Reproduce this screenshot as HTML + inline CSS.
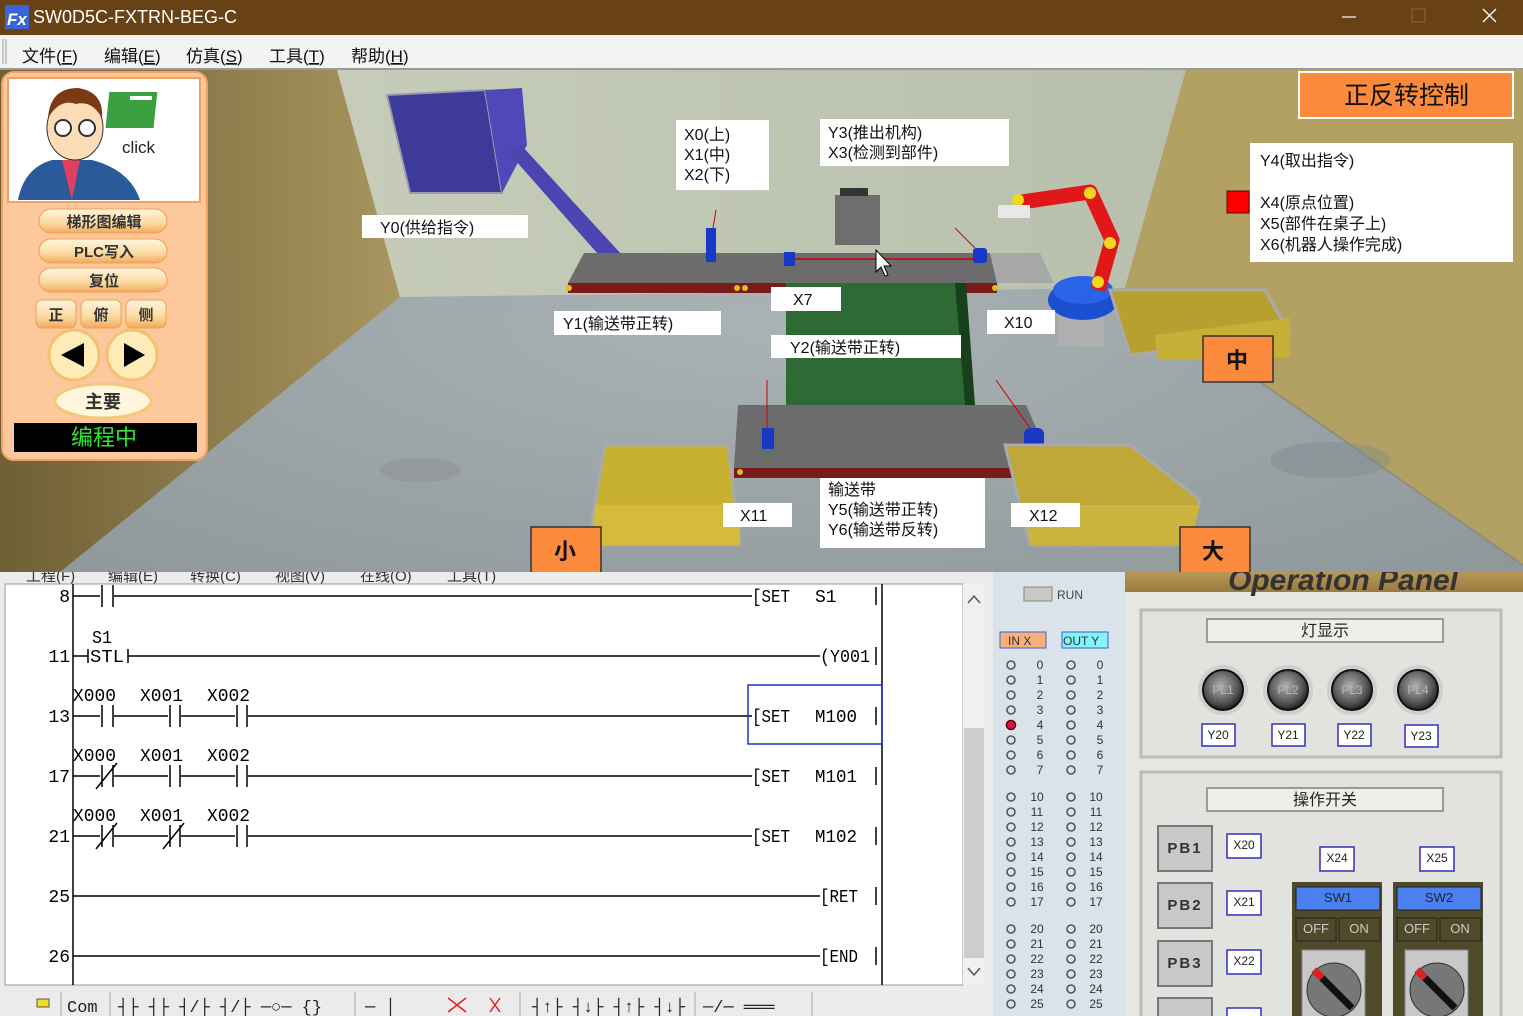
<!DOCTYPE html>
<html><head><meta charset="utf-8"><style>
html,body{margin:0;padding:0;width:1523px;height:1016px;overflow:hidden;background:#fff}
svg{display:block}
.cj{font-family:"Liberation Sans","Noto Sans CJK SC",sans-serif}
.mo{font-family:"Liberation Mono","DejaVu Sans Mono",monospace}
</style></head><body>
<svg width="1523" height="1016" viewBox="0 0 1523 1016" xmlns="http://www.w3.org/2000/svg">
<defs>
<linearGradient id="lw" x1="0" y1="0" x2="1" y2="0"><stop offset="0" stop-color="#6f5f35"/><stop offset="1" stop-color="#a8955f"/></linearGradient>
<linearGradient id="bw" x1="0" y1="0" x2="1" y2="0"><stop offset="0" stop-color="#c6ccb8"/><stop offset="1" stop-color="#b8c0ad"/></linearGradient>
<radialGradient id="fl" cx="0.5" cy="0.5" r="0.7"><stop offset="0" stop-color="#a9b2b4"/><stop offset="1" stop-color="#8e9799"/></radialGradient>
<linearGradient id="pill" x1="0" y1="0" x2="0" y2="1"><stop offset="0" stop-color="#fff6e0"/><stop offset="0.6" stop-color="#fbd9a0"/><stop offset="1" stop-color="#f2a85a"/></linearGradient>
<radialGradient id="lamp" cx="0.45" cy="0.4" r="0.6"><stop offset="0" stop-color="#b0b0b0"/><stop offset="0.7" stop-color="#555"/><stop offset="1" stop-color="#222"/></radialGradient>
<linearGradient id="hdr" x1="0" y1="0" x2="0" y2="1"><stop offset="0" stop-color="#b89858"/><stop offset="1" stop-color="#9a7c40"/></linearGradient>
<clipPath id="bot"><rect x="0" y="572" width="1523" height="444"/></clipPath>
</defs>

<!-- title bar -->
<rect x="0" y="0" width="1523" height="35" fill="#684214"/>
<rect x="5" y="5" width="24" height="24" fill="#3a64d8"/>
<text x="7" y="25" font-size="17" font-style="italic" font-weight="bold" fill="#fff" font-family="Liberation Sans,sans-serif">Fx</text>
<text x="33" y="23" font-size="18" fill="#fff" font-family="Liberation Sans,sans-serif">SW0D5C-FXTRN-BEG-C</text>
<line x1="1342" y1="17" x2="1356" y2="17" stroke="#fff" stroke-width="1.2"/>
<rect x="1412" y="9" width="13" height="13" fill="none" stroke="#8a6a40"/>
<path d="M1483 9 L1496 22 M1496 9 L1483 22" stroke="#fff" stroke-width="1.3"/>

<!-- menu -->
<rect x="0" y="35" width="1523" height="34" fill="#f3f3f3"/>
<line x1="3" y1="39" x2="3" y2="64" stroke="#999"/><line x1="6" y1="39" x2="6" y2="64" stroke="#999"/>
<g class="cj" font-size="17" fill="#111">
<text x="22" y="62">文件(<tspan text-decoration="underline">F</tspan>)</text>
<text x="104" y="62">编辑(<tspan text-decoration="underline">E</tspan>)</text>
<text x="186" y="62">仿真(<tspan text-decoration="underline">S</tspan>)</text>
<text x="269" y="62">工具(<tspan text-decoration="underline">T</tspan>)</text>
<text x="351" y="62">帮助(<tspan text-decoration="underline">H</tspan>)</text>
</g>
<rect x="0" y="68" width="1523" height="2" fill="#9a9a9a"/>

<!-- 3D scene -->
<rect x="0" y="70" width="1523" height="502" fill="url(#fl)"/>
<polygon points="0,70 337,70 400,297 60,572 0,572" fill="url(#lw)"/>
<polygon points="337,70 1186,70 1125,288 400,297" fill="url(#bw)"/>
<polygon points="1186,70 1523,70 1523,565 1125,288" fill="#b3a063"/>
<line x1="1125" y1="288" x2="1523" y2="565" stroke="#8e8e80" stroke-width="2"/>
<ellipse cx="420" cy="470" rx="40" ry="12" fill="#8a8a90" opacity="0.4"/>
<ellipse cx="1330" cy="460" rx="60" ry="18" fill="#7e888c" opacity="0.4"/>

<!-- supply hopper -->
<polygon points="387,95 485,90 502,193 410,193" fill="#3d3a9a" stroke="#9a9ab0" stroke-width="2"/>
<polygon points="485,90 522,88 527,145 502,193" fill="#5048b8"/>
<polygon points="508,152 522,146 622,255 612,270" fill="#4a45b0"/>
<polygon points="612,270 622,255 625,262 616,274" fill="#ddd"/>

<!-- conveyors top -->
<polygon points="584,253 741,253 741,283 568,283" fill="#6c6c6c"/>
<rect x="568" y="283" width="173" height="10" fill="#7a1a1a"/>
<polygon points="741,253 990,253 997,283 741,283" fill="#6c6c6c"/>
<rect x="741" y="283" width="256" height="10" fill="#7a1a1a"/>
<polygon points="990,253 1040,253 1054,283 997,283" fill="#a8a8a8"/>
<rect x="786" y="283" width="180" height="122" fill="#2f6a34"/>
<polygon points="955,283 966,283 975,405 965,405" fill="#18401c"/>
<polygon points="738,405 1026,405 1054,468 734,468" fill="#6c6c6c"/>
<rect x="734" y="468" width="320" height="10" fill="#7a1a1a"/>
<g fill="#d8c020"><circle cx="569" cy="288" r="3"/><circle cx="737" cy="288" r="3"/><circle cx="745" cy="288" r="3"/><circle cx="995" cy="288" r="3"/><circle cx="740" cy="472" r="3"/><circle cx="1052" cy="472" r="3"/></g>
<!-- sensors -->
<rect x="706" y="228" width="10" height="34" fill="#1838c8"/><line x1="713" y1="228" x2="716" y2="210" stroke="#c00"/>
<rect x="784" y="252" width="11" height="14" fill="#1838c8"/>
<line x1="795" y1="259" x2="975" y2="259" stroke="#c00" stroke-width="1.5"/>
<rect x="973" y="248" width="14" height="15" rx="3" fill="#1838c8"/><line x1="975" y1="248" x2="955" y2="228" stroke="#c00"/>
<rect x="762" y="428" width="12" height="21" fill="#1838c8"/><line x1="767" y1="428" x2="767" y2="380" stroke="#c00"/>
<rect x="1024" y="428" width="20" height="21" rx="6" fill="#1838c8"/><line x1="1030" y1="428" x2="996" y2="380" stroke="#c00"/>
<!-- pusher -->
<rect x="835" y="195" width="45" height="50" fill="#6e6e6e"/><rect x="840" y="188" width="28" height="8" fill="#333"/>
<!-- robot -->
<rect x="1058" y="300" width="46" height="46" fill="#b0b0b0"/>
<ellipse cx="1083" cy="300" rx="35" ry="20" fill="#1a4fd0"/>
<ellipse cx="1083" cy="290" rx="30" ry="14" fill="#2a62e8"/>
<path d="M1098 290 L1112 240 L1090 192 L1015 203" fill="none" stroke="#e01818" stroke-width="15" stroke-linejoin="round"/>
<g fill="#f0d820"><circle cx="1098" cy="282" r="6"/><circle cx="1110" cy="243" r="6"/><circle cx="1090" cy="193" r="6"/><circle cx="1018" cy="200" r="6"/></g>
<rect x="998" y="205" width="32" height="13" fill="#e8e8e8"/>
<!-- bins -->
<polygon points="1110,290 1265,290 1290,335 1130,355" fill="#b8a030" stroke="#aaa" stroke-width="3"/>
<polygon points="1155,335 1290,318 1290,357 1158,360" fill="#c8b038"/>
<polygon points="605,445 728,445 740,545 588,545" fill="#c8b030" stroke="#aaa" stroke-width="3"/>
<polygon points="595,505 740,505 740,545 592,545" fill="#d4bc3a"/>
<polygon points="1005,445 1130,445 1200,500 1185,545 1030,545" fill="#c0a838" stroke="#aaa" stroke-width="3"/>
<polygon points="1025,505 1200,505 1190,545 1030,545" fill="#ccb43e"/>

<!-- labels -->
<g class="cj" font-size="16" fill="#111">
<rect x="362" y="215" width="166" height="23" fill="#fff"/><text x="380" y="233">Y0(供给指令)</text>
<rect x="676" y="120" width="93" height="70" fill="#fff"/><text x="684" y="140">X0(上)</text><text x="684" y="160">X1(中)</text><text x="684" y="180">X2(下)</text>
<rect x="820" y="119" width="189" height="47" fill="#fff"/><text x="828" y="138">Y3(推出机构)</text><text x="828" y="158">X3(检测到部件)</text>
<rect x="1250" y="143" width="263" height="119" fill="#fff"/><text x="1260" y="166">Y4(取出指令)</text><text x="1260" y="208">X4(原点位置)</text><text x="1260" y="229">X5(部件在桌子上)</text><text x="1260" y="250">X6(机器人操作完成)</text>
<rect x="1227" y="191" width="22" height="22" fill="#f00" stroke="#600"/>
<rect x="771" y="287" width="70" height="24" fill="#fff"/><text x="793" y="305">X7</text>
<rect x="554" y="311" width="167" height="24" fill="#fff"/><text x="563" y="329">Y1(输送带正转)</text>
<rect x="987" y="310" width="68" height="24" fill="#fff"/><text x="1004" y="328">X10</text>
<rect x="771" y="335" width="190" height="23" fill="#fff"/><text x="790" y="353">Y2(输送带正转)</text>
<rect x="723" y="503" width="69" height="24" fill="#fff"/><text x="740" y="521">X11</text>
<rect x="820" y="478" width="165" height="70" fill="#fff"/><text x="828" y="495">输送带</text><text x="828" y="515">Y5(输送带正转)</text><text x="828" y="535">Y6(输送带反转)</text>
<rect x="1011" y="503" width="69" height="24" fill="#fff"/><text x="1029" y="521">X12</text>
</g>
<g class="cj" fill="#111">
<rect x="1299" y="72" width="214" height="46" fill="#fb8a3c" stroke="#fff" stroke-width="2"/><text x="1344" y="104" font-size="25">正反转控制</text>
<rect x="1203" y="336" width="70" height="46" fill="#fb8a3c" stroke="#333" stroke-width="1.5"/><text x="1226" y="368" font-size="22" font-weight="bold">中</text>
<rect x="531" y="527" width="70" height="50" fill="#fb8a3c" stroke="#333" stroke-width="1.5"/><text x="554" y="559" font-size="22" font-weight="bold">小</text>
<rect x="1180" y="527" width="70" height="50" fill="#fb8a3c" stroke="#333" stroke-width="1.5"/><text x="1202" y="559" font-size="22" font-weight="bold">大</text>
</g>
<!-- cursor -->
<path d="M876 250 L876 272 L881 267 L885 276 L888 275 L884 266 L891 266 Z" fill="#fff" stroke="#000"/>

<!-- left panel -->
<rect x="2" y="72" width="205" height="388" rx="12" fill="#fcc89c" stroke="#f4a060" stroke-width="2"/>
<rect x="8" y="78" width="192" height="124" fill="#fff" stroke="#f0a060" stroke-width="2"/>
<path d="M18 200 Q24 168 52 160 L92 160 Q130 170 140 200 Z" fill="#2a5a9a"/>
<path d="M62 160 L72 200 L80 160 Z" fill="#e04060"/>
<ellipse cx="75" cy="128" rx="28" ry="32" fill="#fddcb8" stroke="#333"/>
<path d="M48 118 Q50 88 78 88 Q104 92 102 118 Q92 100 76 104 Q60 98 48 118Z" fill="#7a3a12"/>
<circle cx="63" cy="128" r="8" fill="#fff" stroke="#333" stroke-width="2"/><circle cx="87" cy="128" r="8" fill="#fff" stroke="#333" stroke-width="2"/>
<rect x="119" y="92" width="48" height="36" fill="#3aa040" transform="skewX(-6)"/><rect x="130" y="96" width="22" height="4" fill="#fff"/>
<text x="122" y="153" font-size="17" fill="#222" font-family="Liberation Sans,sans-serif">click</text>
<g class="cj" font-size="15" font-weight="bold" fill="#333" text-anchor="middle">
<rect x="39" y="209" width="128" height="24" rx="12" fill="url(#pill)" stroke="#f2a050"/><text x="104" y="227">梯形图编辑</text>
<rect x="39" y="239" width="128" height="24" rx="12" fill="url(#pill)" stroke="#f2a050"/><text x="104" y="257">PLC写入</text>
<rect x="39" y="268" width="128" height="24" rx="12" fill="url(#pill)" stroke="#f2a050"/><text x="104" y="286">复位</text>
<rect x="36" y="300" width="40" height="28" rx="6" fill="url(#pill)" stroke="#f2a050"/><text x="56" y="320">正</text>
<rect x="81" y="300" width="40" height="28" rx="6" fill="url(#pill)" stroke="#f2a050"/><text x="101" y="320">俯</text>
<rect x="126" y="300" width="40" height="28" rx="6" fill="url(#pill)" stroke="#f2a050"/><text x="146" y="320">侧</text>
<circle cx="74" cy="355" r="25" fill="#fdebb8" stroke="#f6c070" stroke-width="3"/>
<circle cx="132" cy="355" r="25" fill="#fdebb8" stroke="#f6c070" stroke-width="3"/>
<ellipse cx="103" cy="401" rx="48" ry="17" fill="#fff6dc" stroke="#f4c878" stroke-width="3"/><text x="103" y="408" font-size="18">主要</text>
</g>
<path d="M61 355 L84 343 L84 367 Z" fill="#000"/><path d="M145 355 L124 343 L124 367 Z" fill="#000"/>
<rect x="14" y="423" width="183" height="29" fill="#000"/>
<text x="104" y="445" text-anchor="middle" font-size="22" fill="#2ee82e" class="cj">编程中</text>

<!-- ladder window -->
<rect x="0" y="572" width="993" height="444" fill="#ececec"/>
<g class="cj" font-size="15" fill="#333" clip-path="url(#bot)"><text x="26" y="581">工程(F)</text><text x="108" y="581">编辑(E)</text><text x="190" y="581">转换(C)</text><text x="275" y="581">视图(V)</text><text x="360" y="581">在线(O)</text><text x="447" y="581">工具(T)</text></g>
<rect x="5" y="584" width="958" height="401" fill="#fff" stroke="#999"/>
<line x1="73" y1="584" x2="73" y2="985" stroke="#000" stroke-width="1.5"/>
<line x1="882" y1="584" x2="882" y2="985" stroke="#000" stroke-width="1.5"/>
<g stroke="#000" stroke-width="1.5" fill="none">
<path d="M73 596 H100 M114 596 H752"/><path d="M102 585 V607 M113 585 V607"/>
<path d="M73 656 H88 M128 656 H820"/><path d="M88 649 V663 M128 649 V663"/>
<path d="M73 716 H100 M114 716 H168 M181 716 H235 M248 716 H752"/>
<path d="M102 705 V727 M113 705 V727 M170 705 V727 M180 705 V727 M237 705 V727 M247 705 V727"/>
<path d="M73 776 H100 M114 776 H168 M181 776 H235 M248 776 H752"/>
<path d="M102 765 V787 M113 765 V787 M170 765 V787 M180 765 V787 M237 765 V787 M247 765 V787 M96 789 L117 763"/>
<path d="M73 836 H100 M114 836 H168 M181 836 H235 M248 836 H752"/>
<path d="M102 825 V847 M113 825 V847 M170 825 V847 M180 825 V847 M237 825 V847 M247 825 V847 M96 849 L117 823 M163 849 L184 823"/>
<path d="M73 896 H820 M73 956 H820"/>
<path d="M876 587 V605 M876 647 V665 M876 707 V725 M876 767 V785 M876 827 V845 M876 887 V905 M876 947 V965"/>
</g>
<g class="mo" font-size="18" fill="#000" lengthAdjust="spacingAndGlyphs">
<text x="70" y="602" text-anchor="end">8</text><text x="70" y="662" text-anchor="end">11</text><text x="70" y="722" text-anchor="end">13</text><text x="70" y="782" text-anchor="end">17</text><text x="70" y="842" text-anchor="end">21</text><text x="70" y="902" text-anchor="end">25</text><text x="70" y="962" text-anchor="end">26</text>
<text x="92" y="643" textLength="20" lengthAdjust="spacingAndGlyphs">S1</text><text x="90" y="662" textLength="34" lengthAdjust="spacingAndGlyphs">STL</text>
<text x="73" y="701" textLength="43" lengthAdjust="spacingAndGlyphs">X000</text><text x="140" y="701" textLength="43" lengthAdjust="spacingAndGlyphs">X001</text><text x="207" y="701" textLength="43" lengthAdjust="spacingAndGlyphs">X002</text>
<text x="73" y="761" textLength="43" lengthAdjust="spacingAndGlyphs">X000</text><text x="140" y="761" textLength="43" lengthAdjust="spacingAndGlyphs">X001</text><text x="207" y="761" textLength="43" lengthAdjust="spacingAndGlyphs">X002</text>
<text x="73" y="821" textLength="43" lengthAdjust="spacingAndGlyphs">X000</text><text x="140" y="821" textLength="43" lengthAdjust="spacingAndGlyphs">X001</text><text x="207" y="821" textLength="43" lengthAdjust="spacingAndGlyphs">X002</text>
<text x="752" y="602" textLength="38" lengthAdjust="spacingAndGlyphs">[SET</text><text x="815" y="602">S1</text>
<text x="820" y="662" textLength="50" lengthAdjust="spacingAndGlyphs">(Y001</text>
<text x="752" y="722" textLength="38" lengthAdjust="spacingAndGlyphs">[SET</text><text x="815" y="722" textLength="42" lengthAdjust="spacingAndGlyphs">M100</text>
<text x="752" y="782" textLength="38" lengthAdjust="spacingAndGlyphs">[SET</text><text x="815" y="782" textLength="42" lengthAdjust="spacingAndGlyphs">M101</text>
<text x="752" y="842" textLength="38" lengthAdjust="spacingAndGlyphs">[SET</text><text x="815" y="842" textLength="42" lengthAdjust="spacingAndGlyphs">M102</text>
<text x="820" y="902" textLength="38" lengthAdjust="spacingAndGlyphs">[RET</text>
<text x="820" y="962" textLength="38" lengthAdjust="spacingAndGlyphs">[END</text>
</g>
<rect x="748" y="685" width="134" height="59" fill="none" stroke="#2030c0" stroke-width="1.5"/>
<rect x="963" y="584" width="22" height="401" fill="#f0f0f0"/>
<rect x="964" y="728" width="20" height="230" fill="#cdcdcd"/>
<path d="M968 603 L974 596 L980 603" fill="none" stroke="#555" stroke-width="1.5"/><path d="M968 968 L974 975 L980 968" fill="none" stroke="#555" stroke-width="1.5"/>
<!-- toolbar -->
<rect x="5" y="987" width="830" height="29" fill="#ebebeb"/>
<rect x="37" y="999" width="12" height="8" fill="#f0e020" stroke="#555"/>
<g class="mo" font-size="17" fill="#222"><text x="67" y="1012">Com</text>
<text x="118" y="1012">┤├ ┤├ ┤/├ ┤/├ ─○─ {}</text>
<text x="365" y="1012">─  │</text>
<text x="532" y="1012">┤↑├ ┤↓├ ┤↑├ ┤↓├</text>
<text x="703" y="1012">─/─ ═══</text></g>
<path d="M448 998 L466 1012 M466 998 L448 1012 M490 998 L500 1012 M500 998 L490 1012" stroke="#e02020" stroke-width="1.5"/>
<g stroke="#aaa"><line x1="61" y1="992" x2="61" y2="1016"/><line x1="110" y1="992" x2="110" y2="1016"/><line x1="355" y1="992" x2="355" y2="1016"/><line x1="520" y1="992" x2="520" y2="1016"/><line x1="695" y1="992" x2="695" y2="1016"/><line x1="812" y1="992" x2="812" y2="1016"/></g>

<!-- IO panel -->
<rect x="993" y="572" width="132" height="444" fill="#dae2ea"/>
<rect x="1024" y="587" width="28" height="14" fill="#c8c8c8" stroke="#8a8a6a"/>
<text x="1057" y="599" font-size="12" fill="#444" font-family="Liberation Sans,sans-serif">RUN</text>
<rect x="1000" y="632" width="46" height="16" fill="#f8b07a" stroke="#4060d0"/><text x="1008" y="645" font-size="12" fill="#333" font-family="Liberation Sans,sans-serif">IN X</text>
<rect x="1062" y="632" width="46" height="16" fill="#80f4f8" stroke="#4060d0"/><text x="1063" y="645" font-size="12" fill="#333" font-family="Liberation Sans,sans-serif">OUT Y</text>
<g font-size="12" fill="#333" font-family="Liberation Sans,sans-serif" text-anchor="middle" stroke-width="1.6">
<g fill="none" stroke="#555">
<circle cx="1011" cy="665" r="4"/><circle cx="1011" cy="680" r="4"/><circle cx="1011" cy="695" r="4"/><circle cx="1011" cy="710" r="4"/><circle cx="1011" cy="740" r="4"/><circle cx="1011" cy="755" r="4"/><circle cx="1011" cy="770" r="4"/>
<circle cx="1071" cy="665" r="4"/><circle cx="1071" cy="680" r="4"/><circle cx="1071" cy="695" r="4"/><circle cx="1071" cy="710" r="4"/><circle cx="1071" cy="725" r="4"/><circle cx="1071" cy="740" r="4"/><circle cx="1071" cy="755" r="4"/><circle cx="1071" cy="770" r="4"/>
<circle cx="1011" cy="797" r="4"/><circle cx="1011" cy="812" r="4"/><circle cx="1011" cy="827" r="4"/><circle cx="1011" cy="842" r="4"/><circle cx="1011" cy="857" r="4"/><circle cx="1011" cy="872" r="4"/><circle cx="1011" cy="887" r="4"/><circle cx="1011" cy="902" r="4"/>
<circle cx="1071" cy="797" r="4"/><circle cx="1071" cy="812" r="4"/><circle cx="1071" cy="827" r="4"/><circle cx="1071" cy="842" r="4"/><circle cx="1071" cy="857" r="4"/><circle cx="1071" cy="872" r="4"/><circle cx="1071" cy="887" r="4"/><circle cx="1071" cy="902" r="4"/>
<circle cx="1011" cy="929" r="4"/><circle cx="1011" cy="944" r="4"/><circle cx="1011" cy="959" r="4"/><circle cx="1011" cy="974" r="4"/><circle cx="1011" cy="989" r="4"/><circle cx="1011" cy="1004" r="4"/>
<circle cx="1071" cy="929" r="4"/><circle cx="1071" cy="944" r="4"/><circle cx="1071" cy="959" r="4"/><circle cx="1071" cy="974" r="4"/><circle cx="1071" cy="989" r="4"/><circle cx="1071" cy="1004" r="4"/>
</g>
<circle cx="1011" cy="725" r="4.5" fill="#e0104a" stroke="#600"/>
<text x="1040" y="669">0</text><text x="1040" y="684">1</text><text x="1040" y="699">2</text><text x="1040" y="714">3</text><text x="1040" y="729">4</text><text x="1040" y="744">5</text><text x="1040" y="759">6</text><text x="1040" y="774">7</text>
<text x="1100" y="669">0</text><text x="1100" y="684">1</text><text x="1100" y="699">2</text><text x="1100" y="714">3</text><text x="1100" y="729">4</text><text x="1100" y="744">5</text><text x="1100" y="759">6</text><text x="1100" y="774">7</text>
<text x="1037" y="801">10</text><text x="1037" y="816">11</text><text x="1037" y="831">12</text><text x="1037" y="846">13</text><text x="1037" y="861">14</text><text x="1037" y="876">15</text><text x="1037" y="891">16</text><text x="1037" y="906">17</text>
<text x="1096" y="801">10</text><text x="1096" y="816">11</text><text x="1096" y="831">12</text><text x="1096" y="846">13</text><text x="1096" y="861">14</text><text x="1096" y="876">15</text><text x="1096" y="891">16</text><text x="1096" y="906">17</text>
<text x="1037" y="933">20</text><text x="1037" y="948">21</text><text x="1037" y="963">22</text><text x="1037" y="978">23</text><text x="1037" y="993">24</text><text x="1037" y="1008">25</text>
<text x="1096" y="933">20</text><text x="1096" y="948">21</text><text x="1096" y="963">22</text><text x="1096" y="978">23</text><text x="1096" y="993">24</text><text x="1096" y="1008">25</text>
</g>

<!-- Operation panel -->
<rect x="1125" y="572" width="398" height="444" fill="#e6e6e2"/>
<rect x="1125" y="572" width="398" height="20" fill="url(#hdr)"/>
<text x="1228" y="590" font-size="30" font-weight="bold" font-style="italic" fill="#333" font-family="Liberation Sans,sans-serif" clip-path="url(#bot)">Operation Panel</text>
<rect x="1141" y="610" width="360" height="147" fill="#e2e2de" stroke="#bcbcb4" stroke-width="3"/>
<rect x="1207" y="619" width="236" height="23" fill="#eeeeea" stroke="#9a9a94" stroke-width="2"/>
<text x="1325" y="636" text-anchor="middle" font-size="16" class="cj" fill="#222">灯显示</text>
<g font-family="Liberation Sans,sans-serif" font-size="12" text-anchor="middle" fill="#b8b8b8">
<circle cx="1223" cy="690" r="25" fill="#cfcfcf"/><circle cx="1223" cy="690" r="20" fill="url(#lamp)" stroke="#111" stroke-width="2"/><text x="1223" y="694">PL1</text>
<circle cx="1288" cy="690" r="25" fill="#cfcfcf"/><circle cx="1288" cy="690" r="20" fill="url(#lamp)" stroke="#111" stroke-width="2"/><text x="1288" y="694">PL2</text>
<circle cx="1352" cy="690" r="25" fill="#cfcfcf"/><circle cx="1352" cy="690" r="20" fill="url(#lamp)" stroke="#111" stroke-width="2"/><text x="1352" y="694">PL3</text>
<circle cx="1418" cy="690" r="25" fill="#cfcfcf"/><circle cx="1418" cy="690" r="20" fill="url(#lamp)" stroke="#111" stroke-width="2"/><text x="1418" y="694">PL4</text>
</g>
<g font-family="Liberation Sans,sans-serif" font-size="12" text-anchor="middle" fill="#222">
<rect x="1202" y="724" width="33" height="22" fill="#fff" stroke="#3030c0" stroke-width="1.5"/><text x="1218" y="739">Y20</text>
<rect x="1272" y="724" width="33" height="22" fill="#fff" stroke="#3030c0" stroke-width="1.5"/><text x="1288" y="739">Y21</text>
<rect x="1338" y="724" width="33" height="22" fill="#fff" stroke="#3030c0" stroke-width="1.5"/><text x="1354" y="739">Y22</text>
<rect x="1405" y="725" width="33" height="22" fill="#fff" stroke="#3030c0" stroke-width="1.5"/><text x="1421" y="740">Y23</text>
</g>
<rect x="1141" y="772" width="360" height="250" fill="#e2e2de" stroke="#bcbcb4" stroke-width="3"/>
<rect x="1207" y="788" width="236" height="23" fill="#eeeeea" stroke="#9a9a94" stroke-width="2"/>
<text x="1325" y="805" text-anchor="middle" font-size="16" class="cj" fill="#222">操作开关</text>
<g font-family="Liberation Sans,sans-serif" font-weight="bold" font-size="15" fill="#333" text-anchor="middle" letter-spacing="2">
<rect x="1158" y="826" width="54" height="45" fill="#c8c8c8" stroke="#777" stroke-width="2"/><text x="1185" y="853">PB1</text>
<rect x="1158" y="883" width="54" height="45" fill="#c8c8c8" stroke="#777" stroke-width="2"/><text x="1185" y="910">PB2</text>
<rect x="1158" y="941" width="54" height="45" fill="#c8c8c8" stroke="#777" stroke-width="2"/><text x="1185" y="968">PB3</text>
<rect x="1158" y="998" width="54" height="45" fill="#c8c8c8" stroke="#777" stroke-width="2"/>
</g>
<g font-family="Liberation Sans,sans-serif" font-size="12" text-anchor="middle" fill="#222">
<rect x="1227" y="834" width="34" height="24" fill="#fff" stroke="#3030c0" stroke-width="1.5"/><text x="1244" y="849">X20</text>
<rect x="1227" y="891" width="34" height="24" fill="#fff" stroke="#3030c0" stroke-width="1.5"/><text x="1244" y="906">X21</text>
<rect x="1227" y="950" width="34" height="24" fill="#fff" stroke="#3030c0" stroke-width="1.5"/><text x="1244" y="965">X22</text>
<rect x="1227" y="1008" width="34" height="24" fill="#fff" stroke="#3030c0" stroke-width="1.5"/>
<rect x="1320" y="847" width="34" height="24" fill="#fff" stroke="#3030c0" stroke-width="1.5"/><text x="1337" y="862">X24</text>
<rect x="1420" y="847" width="34" height="24" fill="#fff" stroke="#3030c0" stroke-width="1.5"/><text x="1437" y="862">X25</text>
</g>
<g font-family="Liberation Sans,sans-serif" font-size="13" text-anchor="middle">
<rect x="1292" y="882" width="90" height="140" fill="#4e4a2a"/>
<rect x="1296" y="887" width="84" height="23" fill="#4a80f0" stroke="#222"/><text x="1338" y="902" fill="#223">SW1</text>
<rect x="1296" y="918" width="40" height="23" fill="#4e4a2a" stroke="#222"/><text x="1316" y="933" fill="#ccc">OFF</text>
<rect x="1339" y="918" width="41" height="23" fill="#4e4a2a" stroke="#222"/><text x="1359" y="933" fill="#ccc">ON</text>
<rect x="1302" y="950" width="63" height="70" fill="#c8c8c8" stroke="#888"/><circle cx="1334" cy="990" r="27" fill="#777" stroke="#333"/>
<path d="M1314 970 L1352 1008" stroke="#111" stroke-width="7"/><path d="M1314 970 L1322 978" stroke="#e02020" stroke-width="7"/>
<rect x="1393" y="882" width="90" height="140" fill="#4e4a2a"/>
<rect x="1397" y="887" width="84" height="23" fill="#4a80f0" stroke="#222"/><text x="1439" y="902" fill="#223">SW2</text>
<rect x="1397" y="918" width="40" height="23" fill="#4e4a2a" stroke="#222"/><text x="1417" y="933" fill="#ccc">OFF</text>
<rect x="1440" y="918" width="41" height="23" fill="#4e4a2a" stroke="#222"/><text x="1460" y="933" fill="#ccc">ON</text>
<rect x="1405" y="950" width="63" height="70" fill="#c8c8c8" stroke="#888"/><circle cx="1437" cy="990" r="27" fill="#777" stroke="#333"/>
<path d="M1417 970 L1455 1008" stroke="#111" stroke-width="7"/><path d="M1417 970 L1425 978" stroke="#e02020" stroke-width="7"/>
</g>
</svg>
</body></html>
